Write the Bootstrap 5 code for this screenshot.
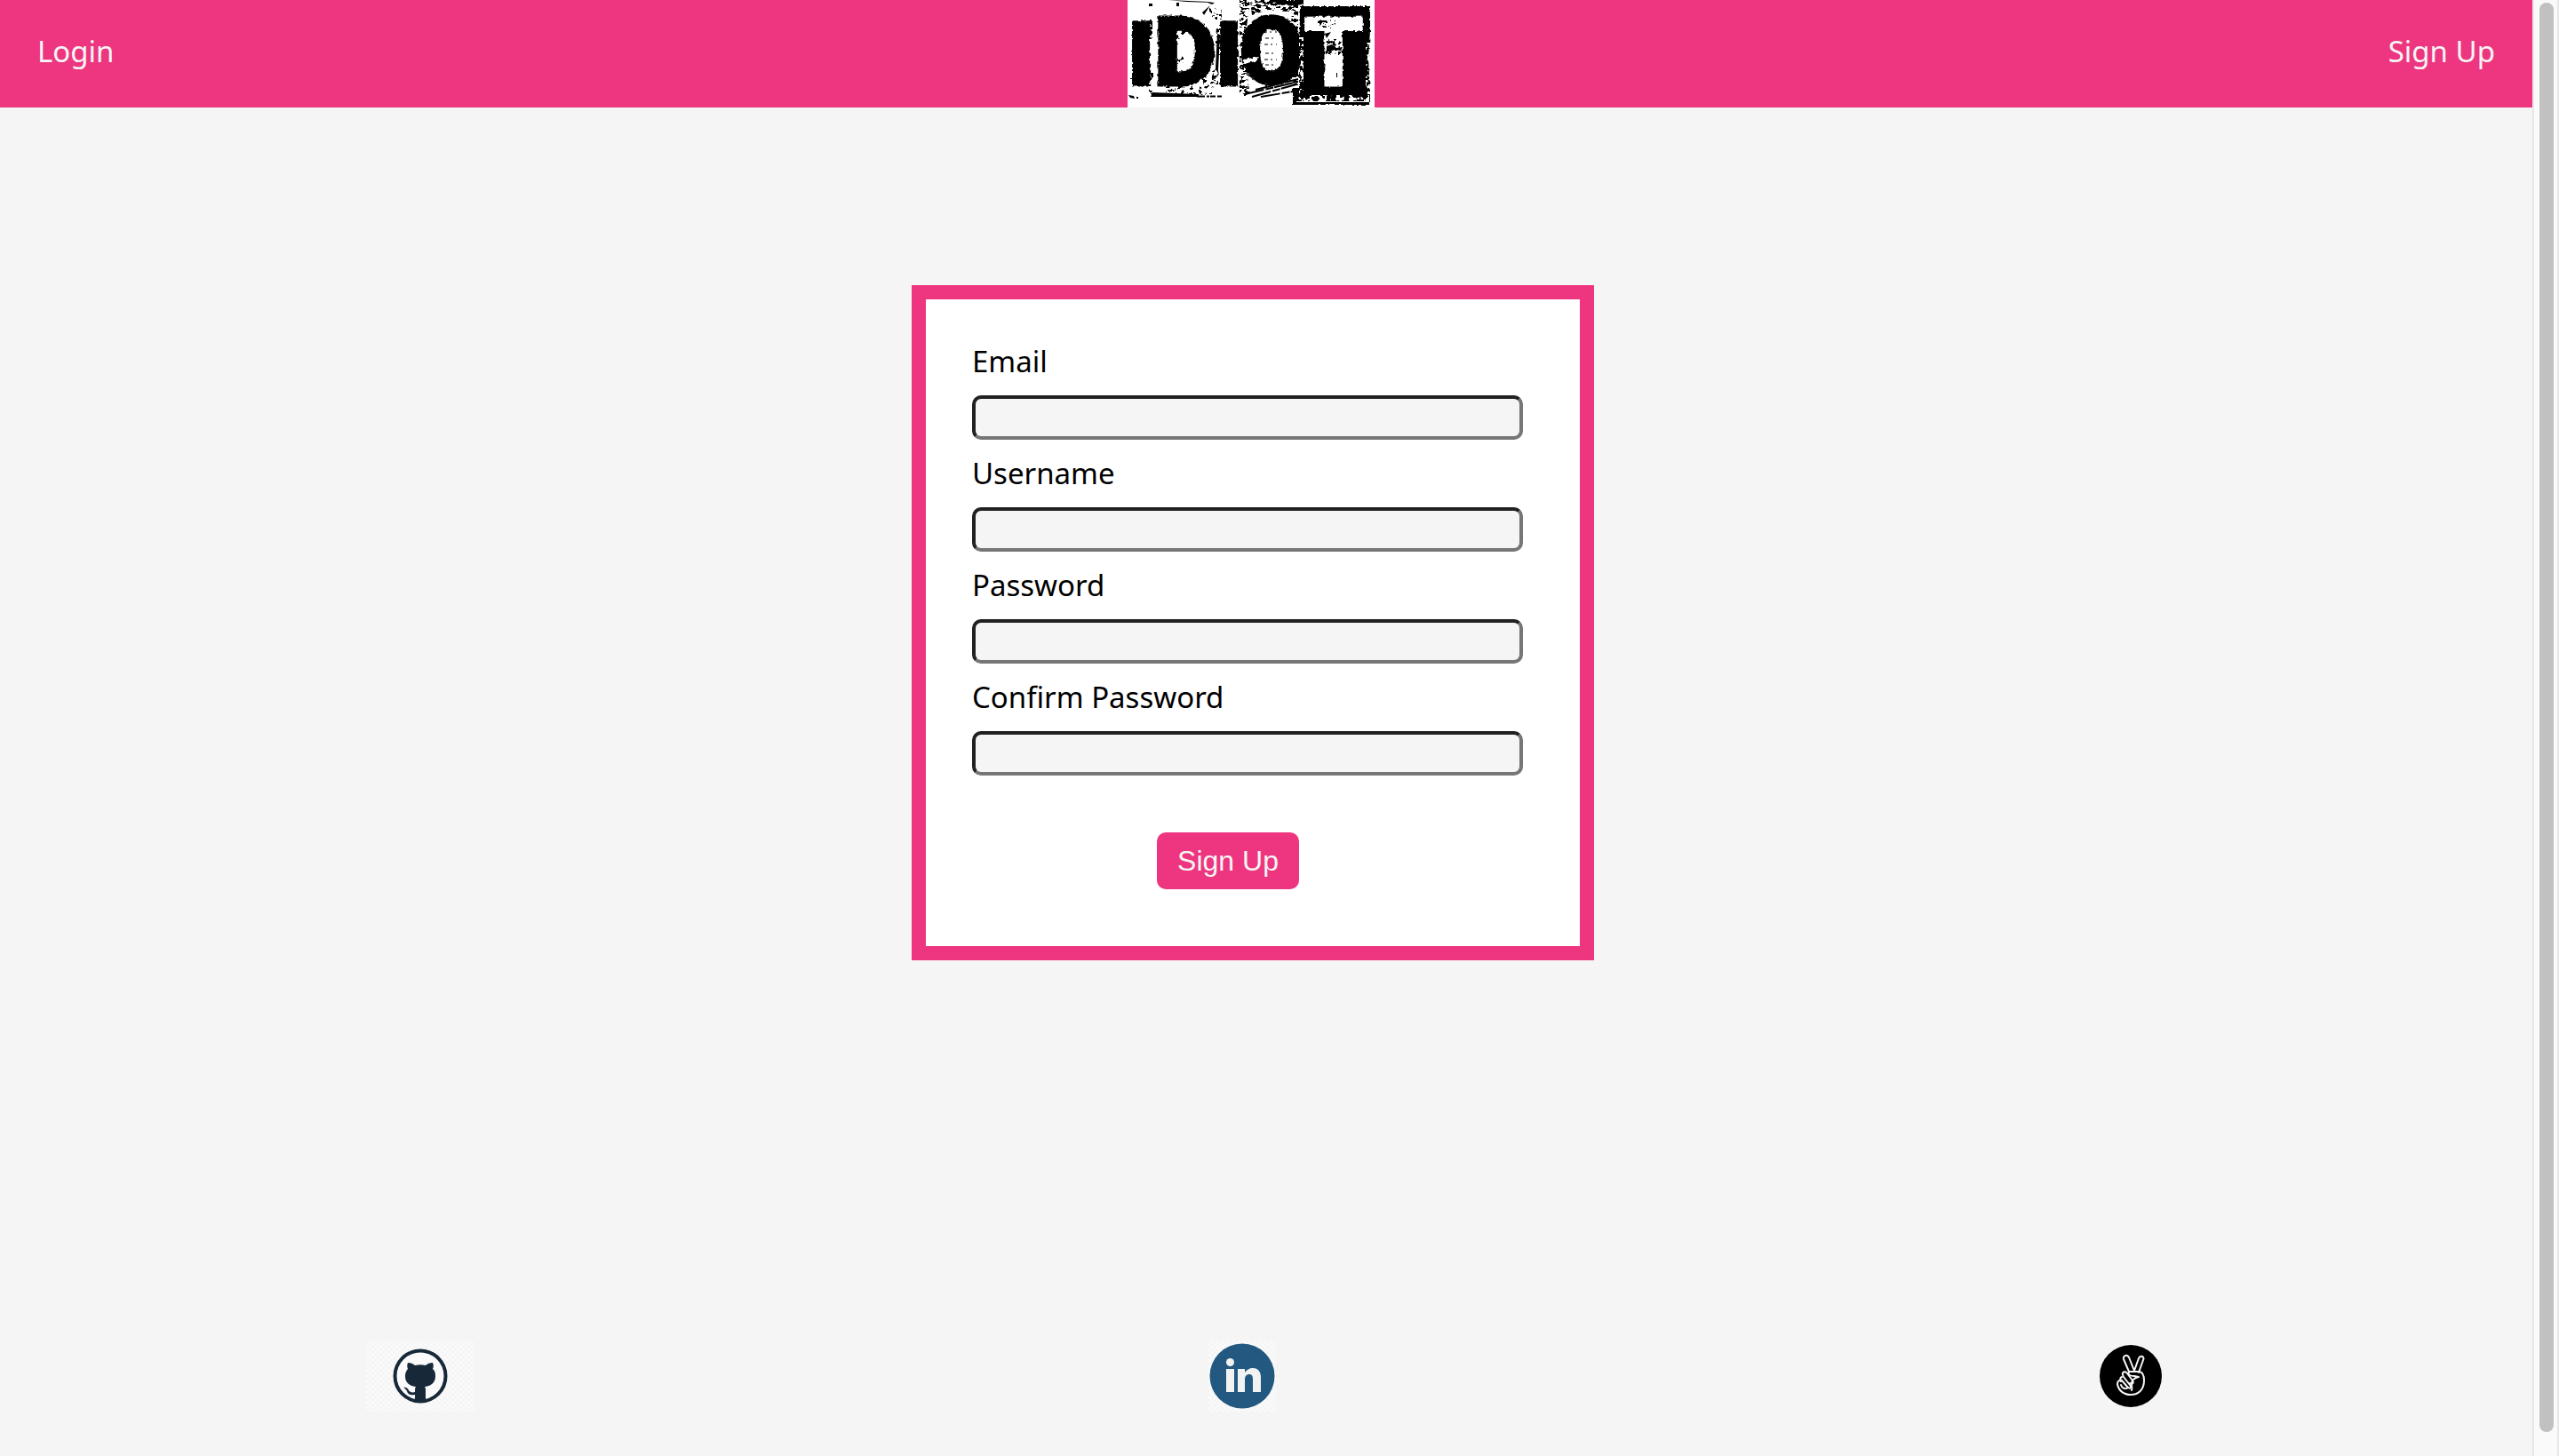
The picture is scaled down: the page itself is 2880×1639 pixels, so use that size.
<!DOCTYPE html>
<html lang="en">
<head>
<meta charset="utf-8">
<meta name="viewport" content="width=device-width, initial-scale=1">
<title>Sign Up</title>
<link href="https://cdn.jsdelivr.net/npm/bootstrap@5.3.0/dist/css/bootstrap.min.css" rel="stylesheet">
<style>
:root { --brand: #ee357f; --paper: #f5f5f5; }
body { background: var(--paper); font-family: "Noto Sans", sans-serif; font-size: 33px; line-height: 44px; color: #000; }
.site-header { background: var(--brand); padding: 0 42px; }
.site-header a { color: var(--paper); text-decoration: none; padding-bottom: 6px; }
.site-header .logo-link { padding: 0; }
.logo-link svg, .site-footer svg { display: block; overflow: visible; }
.main-area { padding: 200px 30px 0 0; }
.signup-card { width: 768px; max-width: 100%; background: #fff; border: 16px solid var(--brand); padding: 48px 64px 64px 52px; }
.field-label { display: block; margin-bottom: 16px; }
.field-box { display: block; width: 100%; height: 50px; padding: 2px 8px; margin-bottom: 16px; background: var(--paper); border: 4px solid; border-color: #212121 #767676 #767676 #212121; border-radius: 10px; font-size: 28px; }
.submit-row { padding: 48px 44px 0 0; }
.btn-brand, .btn-brand:hover { background: var(--brand); color: var(--paper); border: 0; border-radius: 10px; padding: 0 16px; width: 160px; height: 64px; font: 32px "Liberation Sans", sans-serif; }
.site-footer { padding: 0 316px 50px 412px; }
.wide-slot { width: 272px; }
.scroll-track { width: 30px; background: #fafafa; border-left: 2px solid #e8e8e8; border-right: 2px solid #e8e8e8; padding: 3px 4px 27px 6px; }
.scroll-thumb { background: #c1c1c1; border-radius: 8px; }
.ransom { font-family: Roboto, sans-serif; font-weight: 900; text-anchor: middle; }
</style>
</head>
<body class="d-flex min-vh-100">
<div class="d-flex flex-column flex-grow-1">
  <header class="site-header d-flex justify-content-between align-items-center">
    <a href="#login">Login</a>
    <a href="#home" class="logo-link" aria-label="Home">
      <svg width="278" height="121" viewBox="0 0 278 121">
        <defs>
          <filter id="specks" x="0" y="0" width="100%" height="100%" color-interpolation-filters="sRGB"><feTurbulence type="fractalNoise" baseFrequency=".2 .26" numOctaves="3" seed="8"/><feColorMatrix values="0 0 0 0 0  0 0 0 0 0  0 0 0 0 0  22 0 0 0 -12.3"/><feComposite in2="SourceGraphic" operator="in"/></filter>
          <filter id="dense" x="0" y="0" width="100%" height="100%" color-interpolation-filters="sRGB"><feTurbulence type="fractalNoise" baseFrequency=".16 .32" numOctaves="3" seed="4"/><feColorMatrix values="0 0 0 0 0  0 0 0 0 0  0 0 0 0 0  20 0 0 0 -9.6"/><feComposite in2="SourceGraphic" operator="in"/></filter>
          <filter id="chips" x="0" y="0" width="100%" height="100%" color-interpolation-filters="sRGB"><feTurbulence type="fractalNoise" baseFrequency=".2" numOctaves="3" seed="21"/><feColorMatrix values="0 0 0 0 1  0 0 0 0 1  0 0 0 0 1  20 0 0 0 -10.8"/><feComposite in2="SourceGraphic" operator="in"/></filter>
          <filter id="rough" x="-5%" y="-5%" width="110%" height="110%" color-interpolation-filters="sRGB"><feTurbulence type="fractalNoise" baseFrequency=".25" numOctaves="2" seed="3" result="n"/><feDisplacementMap in="SourceGraphic" in2="n" scale="4" xChannelSelector="R" yChannelSelector="G"/></filter>
        </defs>
        <rect width="278" height="121" fill="#fff"/>
        <!-- torn paper behind D -->
        <path d="M23 22h5v22h-5zM24 82h5v24h-5zM92 8h14v14H92zM84 88l18-12v20l-22 10zM99 32h10v20H99zM40 97h55v10H40z" filter="url(#specks)"/>
        <path d="M46 0l46 2 4 1-30-1zM28 104l52 2v3H26zM101 38l3 1-2 40 1 6-4-8zM55 3h3v4h-3zM24 4h4v3h-4zM1 107l6 1 1 3-5-1zM10 109h2v2h-2zM3 88h2v1H3zM88 2l10 1-3 2zM84 14l9-8-7 11z"/>
        <path d="M78 108.500h28" stroke="#000" stroke-width="2" stroke-dasharray="9 2 3 1 6 2"/>
        <!-- scratched paper behind O -->
        <path d="M126 0h12l-4 30v50l4 28h-12zM138 0h54v18l-14-5-20-2-18 6zM184 18h8v78h-12l6-20z" filter="url(#dense)"/>
        <path d="M160 0h38v5l-10 1-28-3zM126 0h9v2h-9z" filter="url(#rough)"/>
        <path d="M132 106l60-14M140 109l50-14M144 101l48-12M150 109l42-7" stroke="#000" stroke-width="2" stroke-dasharray="22 2 9 1"/>
        <g filter="url(#rough)">
          <g class="ransom" stroke="#000" stroke-width="3">
            <text x="15" y="96" font-size="100">I</text>
            <text x="65" y="96" font-size="108">D</text>
            <text x="114" y="96" font-size="100">I</text>
            <text x="162" y="94" font-size="105">O</text>
          </g>
        </g>
        <path d="M56 31l8-2 6 3-14 14zM56 66l7-3v7l-7 3z" filter="url(#specks)"/>
        <path d="M153 36h15M155 43h12M154 50h14M155 60h13M154 67h14M155 73h13" stroke="#000" stroke-width="1" stroke-dasharray="4 3 2 4 6 2"/>
        <path d="M130 67l17-3-3 5-13 3z" fill="#fff" filter="url(#rough)"/>
        <!-- black block with T -->
        <path d="M194 7h79v28l-2 30 2 40v13h-87V99h7z" filter="url(#rough)"/>
        <path d="M193 109l79 2v3h-81z" filter="url(#chips)"/>
        <path d="M268 48h7v58h-7zM193 42h5v64h-5zM198 107h74v7h-74z" filter="url(#chips)"/>
        <path d="M190 114.500h82" stroke="#fff" stroke-width="1"/>
        <g filter="url(#rough)"><text class="ransom" x="232" y="96" font-size="107" fill="#fff" stroke="#fff" stroke-width="2">T</text></g>
        <path d="M223 44h20v18h-20zM214 22h20v10h-20z" filter="url(#specks)"/>
        <path d="M224 52l6-2 5 4 7-1-2 4-7-1-9 3zM235 82h1v5h-1zM222 38l7-2-5 7z"/>
      </svg>
    </a>
    <a href="#signup">Sign Up</a>
  </header>

  <main class="main-area d-flex justify-content-center">
    <form class="signup-card">
      <label class="field-label" for="email">Email</label>
      <input class="field-box" type="email" id="email">
      <label class="field-label" for="username">Username</label>
      <input class="field-box" type="text" id="username">
      <label class="field-label" for="password">Password</label>
      <input class="field-box" type="password" id="password">
      <label class="field-label" for="confirm">Confirm Password</label>
      <input class="field-box" type="password" id="confirm">
      <div class="submit-row d-flex justify-content-center">
        <button class="btn btn-brand" type="submit">Sign Up</button>
      </div>
    </form>
  </main>

  <footer class="site-footer mt-auto d-flex justify-content-between align-items-center">
    <a href="#github" aria-label="GitHub">
      <svg width="122" height="80" viewBox="0 0 122 80">
        <defs><pattern id="checker" width="6" height="6" patternUnits="userSpaceOnUse"><rect width="6" height="6" fill="#fafafa"/><path d="M0 0h3v3H0zM3 3h3v3H3z" fill="#f5f5f5"/></pattern></defs>
        <rect width="122" height="80" fill="url(#checker)"/>
        <circle cx="61" cy="40" r="28.500" fill="#fafafa" stroke="#172838" stroke-width="4"/>
        <path d="M47 25c3 0 6 1 8 3 4-1 8-1 12 0 2-2 5-3 8-3 1 2 1 5 0 7 3 3 3 5 3 8 0 7-4 11-12 12 1 1 1 3 1 5v11H55v-7c-6 1-8-1-9-4-1-2-2-3-4-4 3-1 5 1 6 3 1 2 4 3 7 2 0-3 0-5 1-6-8-1-12-5-12-12 0-3 1-6 3-8-1-2-1-5 0-7z" fill="#172838"/>
      </svg>
    </a>
    <a href="#linkedin" aria-label="LinkedIn">
      <svg width="76" height="80" viewBox="0 0 76 80">
        <rect width="76" height="80" fill="url(#checker)"/>
        <circle cx="38" cy="40" r="36.500" fill="#235980"/>
        <g fill="#f1f3f3"><circle cx="24.500" cy="24.500" r="4.500"/><rect x="20" y="32" width="9" height="26"/><path d="M33 32h8v4c2-3 5-5 9-5 6 0 9 4 9 11v16h-9V44c0-4-1-6-4-6s-5 2-5 6v14h-8z"/></g>
      </svg>
    </a>
    <a href="#angellist" class="wide-slot d-flex justify-content-center" aria-label="AngelList">
      <svg width="76" height="80" viewBox="0 0 76 80">
        <circle cx="38" cy="40" r="35"/>
        <g fill="none" stroke="#f4f4f4" stroke-width="2" stroke-linecap="round" stroke-linejoin="round">
          <path d="M36 35l-6-14c-1-4 4-6 6-2l6 15M42 34l5-14c2-4 7-2 5 2l-5 14"/>
          <path d="M36 35h12c4 1 5 5 5 10 0 10-6 16-15 16-8 0-14-5-15-12 0-3 2-5 5-4l7 8c3 2 4-1 2-3l-7-9c-3-5 1-8 4-4l6 8c2 3-1 5-3 3"/>
          <path d="M36 35c-2 4 2 5 6 5l5 1c-5 1-8 4-8 8 0 3 1 5 0 7M28 41c-2 1-2 3-1 5M27 50c1 4 5 5 8 3"/>
        </g>
      </svg>
    </a>
  </footer>
</div>
<div class="scroll-track d-flex flex-shrink-0" aria-hidden="true"><div class="scroll-thumb flex-grow-1"></div></div>
<script src="https://cdn.jsdelivr.net/npm/bootstrap@5.3.0/dist/js/bootstrap.bundle.min.js"></script>
</body>
</html>
